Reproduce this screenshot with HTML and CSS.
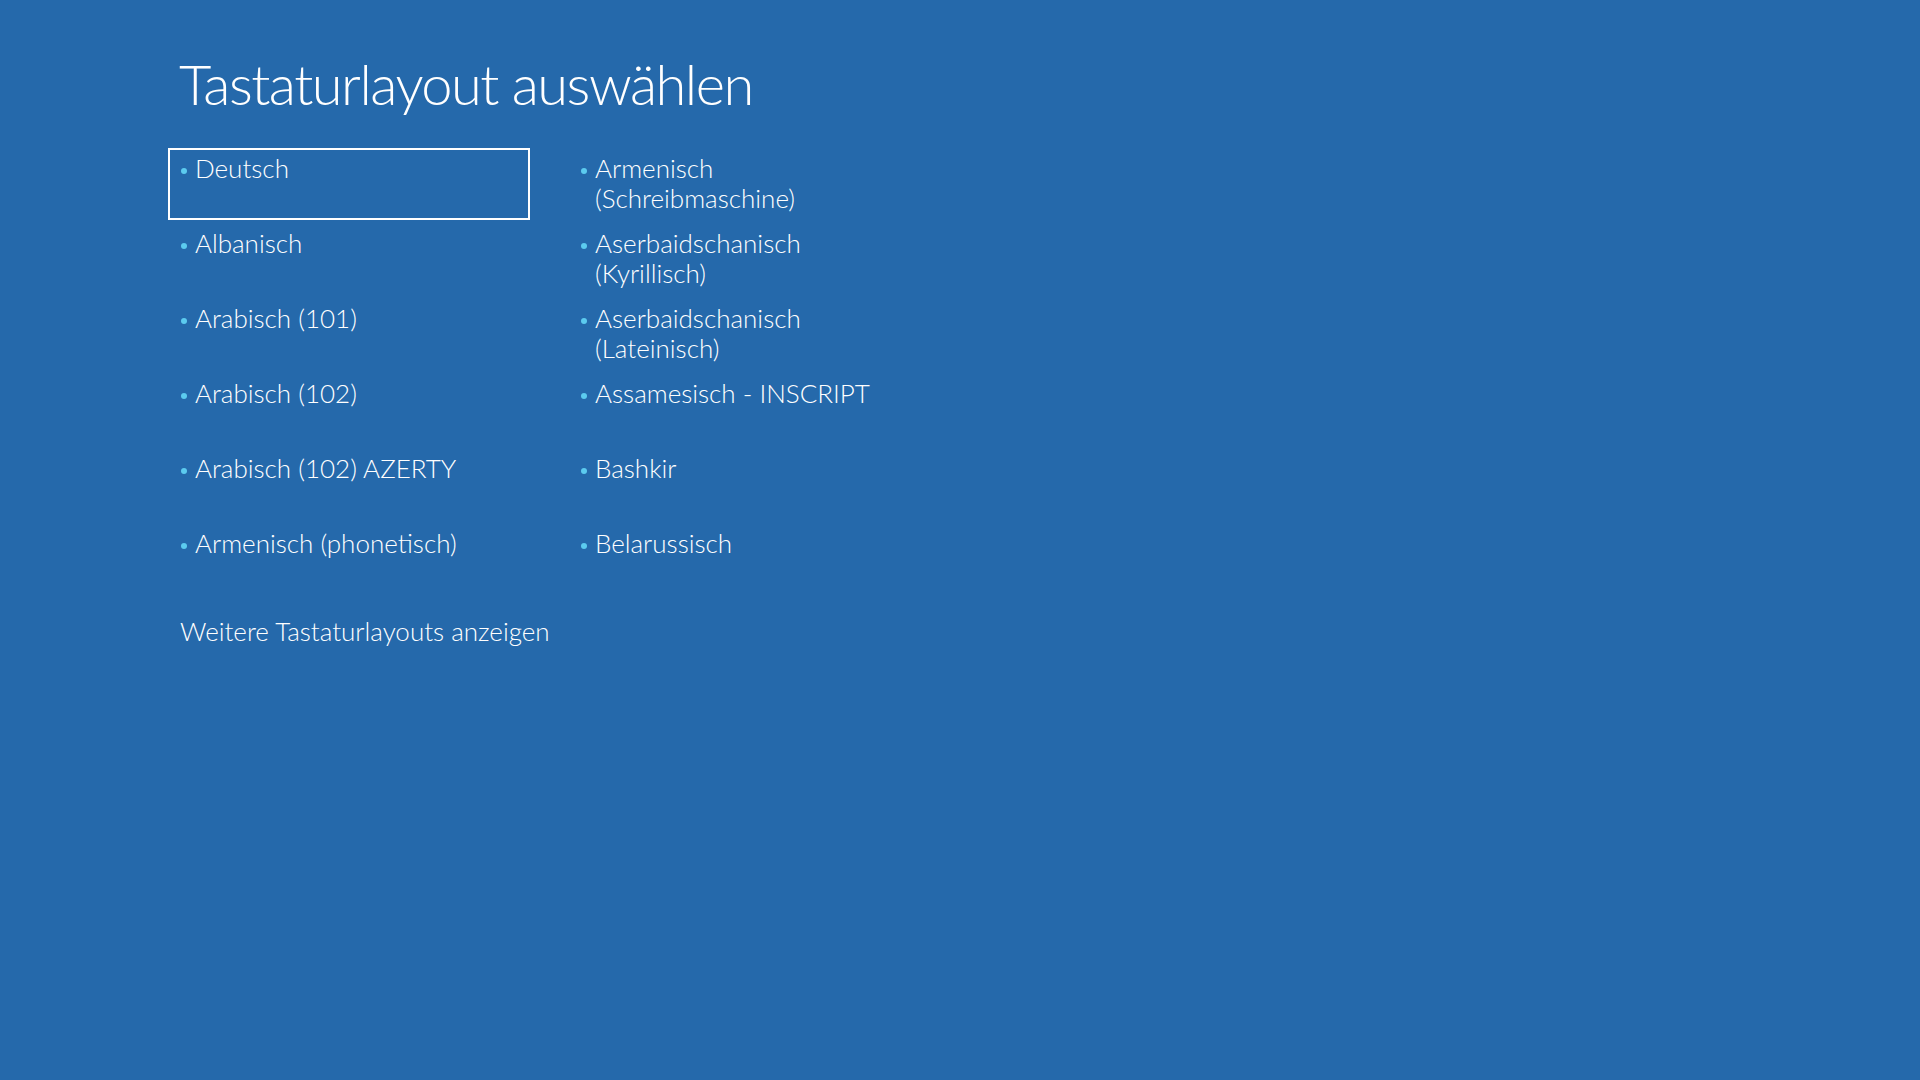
FILE: index.html
```html
<!DOCTYPE html>
<html lang="de">
	<head>
		<meta charset="UTF-8" />
		<meta name="viewport" content="width=device-width, initial-scale=1.0" />
		<title>Tastaturlayout auswählen</title>

		<link rel="stylesheet" href="styles.css">
	</head>
	<body>
		<main class="page">
			<h1 class="title">Tastaturlayout auswählen</h1>
			<ul class="layouts">
				<li class="layout selected"><span class="dot"></span><span class="name">Deutsch</span></li>
				<li class="layout"><span class="dot"></span><span class="name">Albanisch</span></li>
				<li class="layout"><span class="dot"></span><span class="name">Arabisch (101)</span></li>
				<li class="layout"><span class="dot"></span><span class="name">Arabisch (102)</span></li>
				<li class="layout"><span class="dot"></span><span class="name">Arabisch (102) AZERTY</span></li>
				<li class="layout"><span class="dot"></span><span class="name">Armenisch (phonetisch)</span></li>
				<li class="layout"><span class="dot"></span><span class="name">Armenisch (Schreibmaschine)</span></li>
				<li class="layout"><span class="dot"></span><span class="name">Aserbaidschanisch (Kyrillisch)</span></li>
				<li class="layout"><span class="dot"></span><span class="name">Aserbaidschanisch (Lateinisch)</span></li>
				<li class="layout"><span class="dot"></span><span class="name">Assamesisch - INSCRIPT</span></li>
				<li class="layout"><span class="dot"></span><span class="name">Bashkir</span></li>
				<li class="layout"><span class="dot"></span><span class="name">Belarussisch</span></li>
			</ul>
			<a class="more" href="#">Weitere Tastaturlayouts anzeigen</a>
		</main>
	</body>
</html>
```

FILE: styles.css
```css
body {
	margin: 0;
	background: #2569ab;
	color: #fff;
	font-family: 'Segoe UI', Lato, 'Open Sans', sans-serif;
	min-height: 100vh;
}

.page {
	padding: 44px 0 0 168px;
}

.title {
	margin: 0 0 24px 11px;
	font-size: 56px;
	font-weight: 300;
	line-height: 80px;
	letter-spacing: -1.5px;
}

.layouts {
	list-style: none;
	margin: 0;
	padding: 0;
	display: grid;
	grid-template-columns: 362px 362px;
	grid-template-rows: repeat(6, 72px);
	grid-auto-flow: column;
	column-gap: 38px;
	row-gap: 3px;
}

.layout {
	display: flex;
	align-items: flex-start;
	gap: 8px;
	box-sizing: border-box;
	border: 2px solid transparent;
	padding: 3px 10px 0 11px;
	font-size: 26px;
	font-weight: 300;
	line-height: 30px;
}
.layout.selected {
	border-color: #fff;
}

.dot {
	flex: none;
	width: 6px;
	height: 6px;
	margin-top: 15px;
	border-radius: 50%;
	background: #5ccbef;
}

.more {
	display: inline-block;
	margin: 21px 0 0 12px;
	color: #fff;
	text-decoration: none;
	font-size: 26px;
	font-weight: 300;
	line-height: 30px;
}
```
